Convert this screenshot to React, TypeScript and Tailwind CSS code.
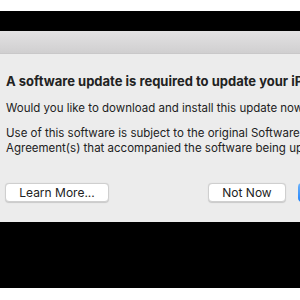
export default function App() {
  return (
    <div className="w-[300px] h-[300px] overflow-hidden bg-white flex flex-col" style={{ fontFamily: 'Inter, "Liberation Sans", Arial, sans-serif' }}>
      <div className="h-[11px] shrink-0 bg-white" />
      <div className="h-[20px] shrink-0 bg-black" />
      <div className="h-[23px] shrink-0 bg-gradient-to-b from-[#e3e2e3] to-[#d0cfd0] border-b border-[#c9c8c9]" />
      <div className="h-[168px] shrink-0 bg-[#ececec] pl-[6px] pt-[19px] flex flex-col whitespace-nowrap text-[#222222]">
        <div className="text-[13px] leading-[16px] font-bold">A software update is required to update your iPhone.</div>
        <div className="mt-[12px] text-[11.5px] leading-[15px]">Would you like to download and install this update now?</div>
        <div className="mt-[10px] text-[11.5px] leading-[15px]">Use of this software is subject to the original Software License</div>
        <div className="text-[11.5px] leading-[15px]">Agreement(s) that accompanied the software being updated.</div>
        <div className="mt-[27px] flex items-center">
          <button className="w-[104px] h-[19px] ml-[-1px] shrink-0 bg-white rounded-[4px] border border-[#cfcfcf] shadow-[0_0.5px_1px_rgba(0,0,0,0.15)] text-[12px] leading-[17px] text-[#222]">Learn More...</button>
          <button className="w-[78px] h-[19px] ml-[99px] shrink-0 bg-white rounded-[4px] border border-[#cfcfcf] shadow-[0_0.5px_1px_rgba(0,0,0,0.15)] text-[12px] leading-[17px] text-[#222]">Not Now</button>
          <button className="w-[100px] h-[19px] ml-[12px] shrink-0 rounded-[4px] bg-gradient-to-b from-[#6cb3fa] to-[#1a82fb] text-[12px] text-white">Download</button>
        </div>
      </div>
      <div className="h-[66px] shrink-0 bg-black" />
      <div className="flex-1 bg-white" />
    </div>
  );
}
